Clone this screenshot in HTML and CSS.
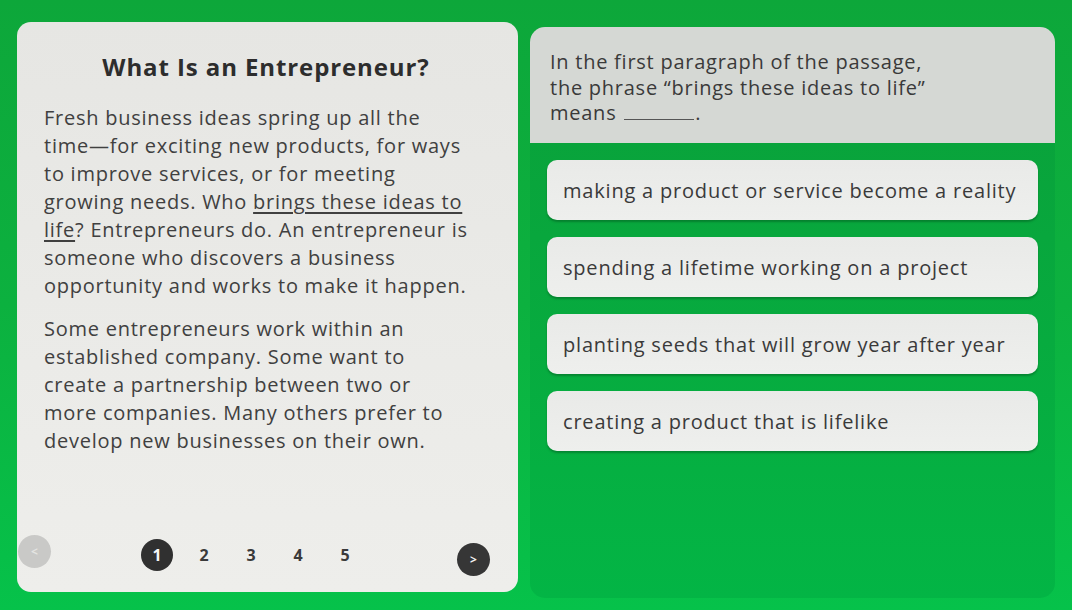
FILE: index.html
```html
<!DOCTYPE html>
<html>
<head>
<meta charset="utf-8">
<link rel="stylesheet" href="styles.css">
</head>
<body>
<div class="screen">
  <div class="passage">
    <h1 class="title">What Is an Entrepreneur?</h1>
    <p class="para">Fresh business ideas spring up all the<br>time—for exciting new products, for ways<br>to improve services, or for meeting<br>growing needs. Who <span class="ul">brings these ideas to </span><br><span class="ul">life</span>? Entrepreneurs do. An entrepreneur is<br>someone who discovers a business<br>opportunity and works to make it happen.</p>
    <p class="para para2">Some entrepreneurs work within an<br>established company. Some want to<br>create a partnership between two or<br>more companies. Many others prefer to<br>develop new businesses on their own.</p>
    <div class="pager">
      <div class="nav prev">&lt;</div>
      <div class="pages">
        <span class="page current">1</span>
        <span class="page">2</span>
        <span class="page">3</span>
        <span class="page">4</span>
        <span class="page">5</span>
      </div>
      <div class="nav next">&gt;</div>
    </div>
  </div>
  <div class="quiz">
    <div class="question">In the first paragraph of the passage,<br>the phrase “brings these ideas to life”<br>means <span class="blank"></span>.</div>
    <div class="options">
      <div class="option">making a product or service become a reality</div>
      <div class="option">spending a lifetime working on a project</div>
      <div class="option">planting seeds that will grow year after year</div>
      <div class="option">creating a product that is lifelike</div>
    </div>
  </div>
</div>
</body>
</html>
```
FILE: styles.css
```css
* { box-sizing: border-box; }
html, body { margin: 0; padding: 0; }
body {
  width: 1072px;
  height: 610px;
  overflow: hidden;
  background: linear-gradient(180deg, #0da73a 0%, #0cb13f 50%, #06c24a 100%);
  font-family: "Open Sans", "Liberation Sans", sans-serif;
  color: #3b3b3b;
}
.screen {
  display: flex;
  align-items: flex-start;
  padding: 22px 0 0 17px;
}
.passage {
  width: 501px;
  height: 570px;
  background: linear-gradient(180deg, #e6e6e3 0%, #ebebe8 60%, #eeeeeb 100%);
  border-radius: 14px;
  padding: 30px 30px 0 27px;
  display: flex;
  flex-direction: column;
}
.title {
  margin: 0 0 22px;
  text-align: center;
  font-size: 24px;
  line-height: 30px;
  font-weight: 700;
  color: #2d2d2d;
  letter-spacing: 0.9px;
}
.para {
  margin: 0;
  font-size: 20px;
  font-weight: 500;
  line-height: 28px;
  letter-spacing: 0.75px;
  color: #404040;
  white-space: nowrap;
}
.para2 { margin-top: 15px; }
.ul {
  text-decoration: underline;
  text-decoration-thickness: 1.5px;
  text-underline-offset: 3px;
}
.pager {
  margin-top: auto;
  margin-bottom: 16px;
  margin-left: -26px;
  margin-right: -2px;
  display: flex;
  align-items: center;
}
.nav {
  width: 33px;
  height: 33px;
  border-radius: 50%;
  display: flex;
  align-items: center;
  justify-content: center;
  font-size: 12px;
  font-weight: 700;
}
.prev { background: #c9c9c7; color: #e4e4e2; margin-bottom: 6px; }
.next { background: #363636; color: #f2f2f2; margin-top: 10px; margin-left: auto; }
.pages {
  display: flex;
  align-items: center;
  gap: 15px;
  margin-left: 90px;
}
.page {
  width: 32px;
  height: 32px;
  display: flex;
  align-items: center;
  justify-content: center;
  font-size: 16px;
  font-weight: 700;
  color: #3a3a3a;
}
.page.current {
  background: #303030;
  color: #f5f5f5;
  border-radius: 50%;
}
.quiz {
  margin-top: 5px;
  margin-left: 12px;
  width: 525px;
  height: 571px;
  background: linear-gradient(180deg, #0a9f39 0%, #07ab3f 55%, #03b545 100%);
  border-radius: 15px;
  overflow: hidden;
}
.question {
  background: #d5d8d4;
  height: 116px;
  padding: 22px 20px 0 20px;
  font-size: 20px;
  font-weight: 500;
  line-height: 25.5px;
  letter-spacing: 0.75px;
  color: #3a3a3a;
  white-space: nowrap;
}
.blank {
  display: inline-block;
  width: 70px;
  border-bottom: 1.5px solid #555;
  margin-left: 2px;
  margin-right: 1px;
}
.options {
  display: flex;
  flex-direction: column;
  gap: 17px;
  padding: 17px 17px 0 17px;
}
.option {
  height: 60px;
  background: linear-gradient(180deg, #e9eae8 0%, #eeefed 100%);
  border-radius: 10px;
  display: flex;
  align-items: center;
  padding: 0 16px;
  font-size: 20px;
  font-weight: 500;
  letter-spacing: 0.8px;
  color: #3a3a3a;
  white-space: nowrap;
  box-shadow: 0 2px 2px rgba(0, 60, 20, 0.35);
}
```
